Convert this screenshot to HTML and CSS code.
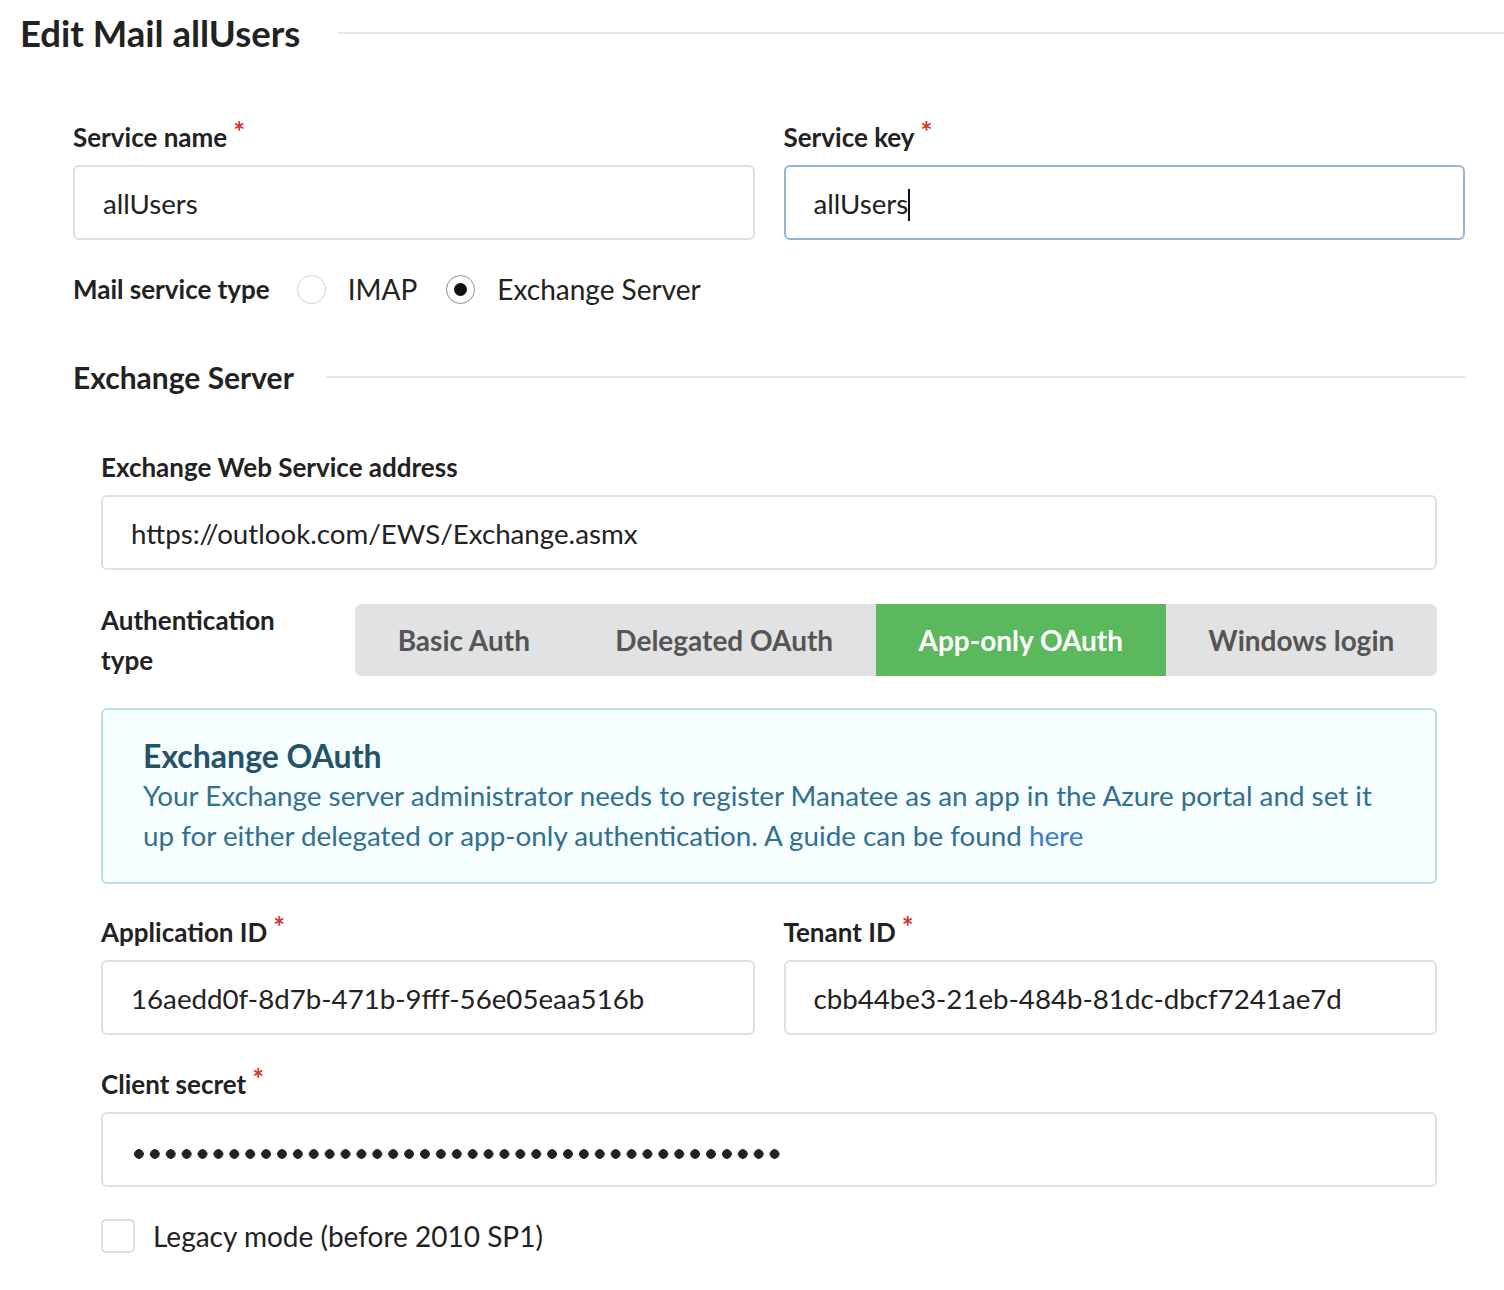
FILE: index.html
```html
<!DOCTYPE html>
<html lang="en">
<head>
    <meta charset="UTF-8">
    <title>Edit Mail allUsers</title>
    <link rel="stylesheet" href="styles.css">
</head>
<body>

    <!-- Titre de la page -->
    <div class="title-row">
        <h1>Edit Mail allUsers</h1>
        <span class="rule"></span>
    </div>

    <div class="form">
        <!-- Nom et clé du service -->
        <div class="row">
            <div class="field">
                <label>Service name<span class="req">*</span></label>
                <div class="input">allUsers</div>
            </div>
            <div class="field">
                <label>Service key<span class="req">*</span></label>
                <div class="input focused">allUsers<span class="caret"></span></div>
            </div>
        </div>

        <!-- Type de service -->
        <div class="radio-row">
            <label>Mail service type</label>
            <span class="radio"></span><span class="radio-text">IMAP</span>
            <span class="radio checked"></span><span class="radio-text">Exchange Server</span>
        </div>

        <div class="section-head">
            <h2>Exchange Server</h2>
            <span class="rule"></span>
        </div>

        <div class="section-body">
            <div class="field">
                <label>Exchange Web Service address</label>
                <div class="input">https://outlook.com/EWS/Exchange.asmx</div>
            </div>

            <div class="auth-row">
                <label class="auth-label">Authentication type</label>
                <div class="segments">
                    <span class="segment">Basic Auth</span>
                    <span class="segment">Delegated OAuth</span>
                    <span class="segment active">App-only OAuth</span>
                    <span class="segment">Windows login</span>
                </div>
            </div>

            <div class="info">
                <h3>Exchange OAuth</h3>
                <p>Your Exchange server administrator needs to register Manatee as an app in the Azure portal and set it up for either delegated or app-only authentication. A guide can be found <a href="#">here</a></p>
            </div>

            <div class="row">
                <div class="field">
                    <label>Application ID<span class="req">*</span></label>
                    <div class="input">16aedd0f-8d7b-471b-9fff-56e05eaa516b</div>
                </div>
                <div class="field">
                    <label>Tenant ID<span class="req">*</span></label>
                    <div class="input">cbb44be3-21eb-484b-81dc-dbcf7241ae7d</div>
                </div>
            </div>

            <div class="field secret">
                <label>Client secret<span class="req">*</span></label>
                <div class="input"><span class="dots"></span></div>
            </div>

            <div class="check-row">
                <span class="checkbox"></span>
                <span>Legacy mode (before 2010 SP1)</span>
            </div>
        </div>
    </div>

</body>
</html>
```

FILE: styles.css
```css
/* Police et couleurs de base */
body {
    font-family: Lato, "Open Sans", sans-serif;
    color: #222;
    margin: 0;
    background: #fff;
}

/* Titre avec ligne */
.title-row {
    display: flex;
    align-items: center;
    padding: 9px 0 0 20px;
    height: 48px;
}

h1 {
    font-size: 36.5px;
    font-weight: bold;
    margin: 0;
    line-height: 48px;
}

.rule {
    flex: 1;
    height: 2px;
    background: #e6e6e6;
    margin-left: 38px;
}

.form {
    margin: 62px 39px 0 73px;
}

/* Labels */
label {
    display: block;
    font-size: 26px;
    font-weight: bold;
    line-height: 36px;
    margin-bottom: 10px;
}

.req {
    color: #d9342b;
    font-size: 28px;
    vertical-align: top;
    line-height: 24px;
    margin-left: 6px;
}

/* Champs */
.row {
    display: flex;
    gap: 29px;
}

.row .field {
    flex: 1;
}

.field {
    margin-bottom: 30px;
}

.field.secret {
    padding-top: 1px;
}

.input {
    height: 71px;
    line-height: 73px;
    padding: 0 28px;
    border: 2px solid #e0e0e0;
    border-radius: 6px;
    font-size: 27.7px;
    color: #222;
    white-space: nowrap;
    overflow: hidden;
}

.input.focused {
    border-color: #93b6d6;
}

.caret {
    display: inline-block;
    width: 2px;
    height: 32px;
    background: #111;
    vertical-align: middle;
    margin-top: -4px;
}

.dots {
    display: inline-block;
    width: 652px;
    height: 12px;
    vertical-align: middle;
    background: radial-gradient(circle, #222 4.5px, transparent 5px) 0 0 / 15.9px 12px repeat-x;
}

/* Boutons radio */
.radio-row {
    display: flex;
    align-items: center;
    height: 40px;
    margin-top: -1px;
    font-size: 28px;
}

.radio-row label {
    margin: 0 27px 0 0;
}

.radio {
    width: 27px;
    height: 27px;
    border: 1px solid #d4d4d4;
    border-radius: 50%;
    box-sizing: content-box;
    margin-right: 22px;
    display: flex;
    align-items: center;
    justify-content: center;
}

.radio.checked {
    border-color: #8e8e8e;
}

.radio.checked::after {
    content: "";
    width: 13px;
    height: 13px;
    border-radius: 50%;
    background: #111;
}

.radio-text {
    margin-right: 29px;
}

/* Section */
.section-head {
    display: flex;
    align-items: center;
    margin-top: 48px;
}

h2 {
    font-size: 30px;
    font-weight: bold;
    line-height: 40px;
    margin: 0;
}

.section-head .rule {
    margin-left: 32px;
}

.section-body {
    margin: 52px 28px 0 28px;
}

/* Type d'authentification */
.auth-row {
    display: flex;
    align-items: center;
    margin-top: 30px;
}

.auth-label {
    width: 190px;
    margin: 0 64px 0 0;
    line-height: 40px;
}

.segments {
    flex: 1;
    display: flex;
    background: #e1e2e4;
    border-radius: 6px;
    overflow: hidden;
}

.segment {
    flex: 1 1 auto;
    text-align: center;
    font-size: 28px;
    font-weight: bold;
    color: #555;
    line-height: 72px;
    padding: 0 20px;
}

.segment.active {
    background: #5cb85c;
    color: #fff;
}

/* Encadré d'information */
.info {
    margin-top: 28px;
    border: 2px solid #b9dfe6;
    border-radius: 6px;
    background: #f5fdfe;
    padding: 26px 40px 26px;
    color: #31708f;
    margin-bottom: 30px;
}

.info h3 {
    margin: 0;
    font-size: 32px;
    line-height: 40px;
    color: #245269;
}

.info p {
    margin: 0;
    font-size: 27.8px;
    line-height: 40px;
}

.info a {
    color: #3a7ad0;
    text-decoration: none;
}

/* Case à cocher */
.check-row {
    display: flex;
    align-items: center;
    font-size: 28px;
    margin-top: 32px;
}

.checkbox {
    width: 30px;
    height: 30px;
    border: 2px solid #dcdcdc;
    border-radius: 5px;
    margin-right: 18px;
}
```
